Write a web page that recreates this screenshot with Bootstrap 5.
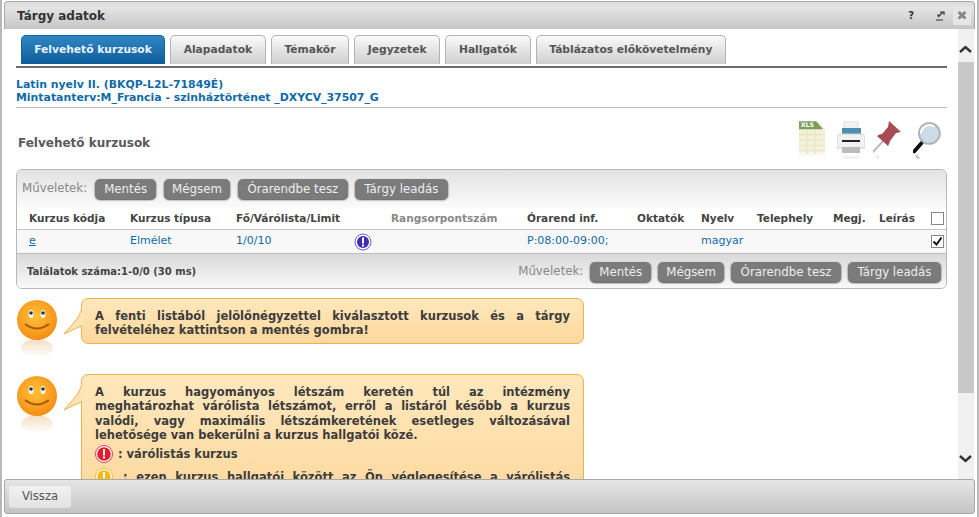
<!DOCTYPE html>
<html lang="hu"><head><meta charset="utf-8"><title>Tárgy adatok</title>
<link rel="stylesheet" href="https://cdn.jsdelivr.net/npm/bootstrap@5.3.0/dist/css/bootstrap.min.css">
<style>
html,body{height:517px;overflow:hidden;background:#fff}
body{font-family:"DejaVu Sans","Liberation Sans",sans-serif;font-size:10.5px;color:#444}
.win-outer{height:517px;border-left:2px solid #b8b8b8;border-right:2px solid #b8b8b8;padding:1px 2px 3px 2px;display:flex;flex-direction:column}
.win-title{height:28px;flex:none;background:linear-gradient(#dcdcdc,#e4e4e4 20%,#c6c6c6);border:1px solid #a8a8a8;border-bottom:0;border-radius:4px 4px 0 0;padding:0 3px 0 12px}
.win-title b{font-size:12px;color:#333}
.win-tool{font-size:10px;font-weight:700;color:#333;margin-right:13px}
.win-close{width:18px;height:18px;background:#e6e6e6;color:#888;font-size:13px;font-weight:700;line-height:18px;text-align:center}
.win-mid{flex:1 1 auto;min-height:0;overflow:hidden}
.win-main{width:954px;flex:none;padding:6px 0 0 12px}
.tabrow{height:33px;border-bottom:2px solid #6e6e6e;width:931px;gap:5px;padding-left:5px;align-items:flex-start}
.tab-i{height:29px;padding:0 12.7px;border:1px solid #b4b4b4;border-bottom:0;border-radius:5px 5px 0 0;background:linear-gradient(#fafafa,#cfcfcf);font-weight:700;color:#555;font-size:10.7px;line-height:27px}
.tab-a{background:linear-gradient(#2f86c4,#0e5c9a);color:#e8f2fa;border-color:#15639f;width:144px;padding:0;text-align:center}
.subj{width:931px;height:40px;border-bottom:1px solid #bdbdbd;padding-top:10px;color:#0f6ba8;font-weight:700;line-height:13px;font-size:10.9px}
.sect{width:931px;height:61px;padding:8px 5px 0 2px}
.sect-t{font-size:12px;font-weight:700;color:#5a5a5a}
.sect-ic{align-self:flex-start;padding-top:5px}
.ic-xls{margin-right:12px}.ic-prn{margin-right:8px}.ic-pin{margin-right:12px}
.grid-box{width:931px;height:120px;border:1px solid #b8b8b8;border-radius:6px;overflow:hidden;background:#fff}
.g-top{height:38px;background:linear-gradient(#e2e2e2,#fbfbfb);padding:0 5px;gap:7px}
.lbl{color:#888;font-size:11.8px}
.g-top .lbl{margin-right:1px}
.act{height:20px;padding:0 9.5px;background:#7b7b7b;border:0;border-radius:5px;color:#eee;font-size:11.8px;line-height:20px;box-shadow:0 1px 2px #444}
.act-me{padding:0 9px}
.act-ms{padding:0 8px}
.g-top .act-me,.g-top .act-ms{margin-right:1px}
.g-head,.g-row{display:grid;grid-template-columns:12px 101px 106px 118px 37px 136px 110px 64px 56px 76px 46px 52px 14px;align-items:center}
.g-head{height:22px;background:#fff;border-bottom:1px solid #c4c4c4;font-weight:700;color:#444;font-size:10.5px}
.g-row{height:24px;background:#f8f8f8;border-bottom:1px solid #bdbdbd;color:#0f6ba8;font-size:11px}
.g-row a{color:#0f6ba8}
.muted-h{color:#888}
.box-ck{width:13px;height:13px;border:1px solid #888;background:#fff;display:block}
.g-foot{height:35px;background:linear-gradient(#d9d9d9,#fafafa);padding:0 5px 0 10px}
.g-foot b{color:#444;font-size:10px}
.g-right{gap:7px}
.tip{width:568px;align-items:flex-start}
.tip-ic{width:65px;flex:none}
.bubble{position:relative;width:503px;background:linear-gradient(#ffe8bd,#fdd79b);border:1px solid #edb14f;border-radius:7px;padding:10px 13px 0 13px;color:#3c3c3c;font-weight:700;font-size:11.5px;line-height:14.3px;height:46px}
.bubble.tall{height:140px;padding-top:10px}
.ln{display:block;text-align:justify;text-align-last:justify}
.ln-e{display:block;text-align:left}
.spout{position:absolute;left:-19px;top:7px}
.t1{margin-top:9px}
.t2{margin-top:16px}
.ic-line{gap:5px;margin-top:2px;min-height:20px}
.ic-gap{gap:10px;margin-top:3px}
.scrl{width:16px;flex:none;background:#f0f0f0;position:relative}
.scrl-th{position:absolute;left:0;right:0;top:33px;height:331px;background:#c8c8c8}
.scrl-a{position:absolute;left:1px}
.scrl-up{top:16px}.scrl-dn{top:426px}
.win-foot{height:35px;flex:none;background:linear-gradient(#e6e6e6,#c4c4c4);border:1px solid #a8a8a8;border-radius:3px;padding-left:4px}
.back-btn{height:22px;width:62px;padding:0;border:0;border-radius:3px;background:linear-gradient(#f2f2f2,#e2e2e2);color:#555;font-size:11.6px}
</style></head><body>
<div class="win-outer">
<div class="win-title d-flex align-items-center justify-content-between">
 <b>Tárgy adatok</b>
 <div class="d-flex align-items-center gap-2"><span class="win-tool">?</span>
  <svg width="10" height="10" viewBox="0 0 10 10"><path d="M1 9h7M3 6l5-5M5 1h4v3M2 4h2" fill="none" stroke="#333" stroke-width="1.2"/></svg>
  <span class="win-close">✖</span></div>
</div>
<div class="win-mid d-flex">
 <div class="win-main">
  <div class="tabrow d-flex">
   <span class="tab-i tab-a">Felvehető kurzusok</span><span class="tab-i">Alapadatok</span><span class="tab-i">Témakör</span><span class="tab-i">Jegyzetek</span><span class="tab-i">Hallgatók</span><span class="tab-i">Táblázatos előkövetelmény</span>
  </div>
  <div class="subj">Latin nyelv II. (BKQP-L2L-71849É)<br>Mintatanterv:M_Francia - szinháztörténet _DXYCV_37507_G</div>
  <div class="sect d-flex justify-content-between align-items-center">
   <span class="sect-t">Felvehető kurzusok</span>
   <div class="sect-ic d-flex align-items-start">
    <svg class="ic-xls" width="26" height="38" viewBox="2 1 29 42"><defs><linearGradient id="fd" x1="0" y1="0" x2="0" y2="1"><stop offset="0" stop-color="#f3f1d8"/><stop offset=".75" stop-color="#f3f1d8"/><stop offset="1" stop-color="#fff"/></linearGradient></defs><path d="M2 1h21l8 9v32H2z" fill="url(#fd)"/><path d="M2 1h19l8 9H2z" fill="#7d9c5e"/><path d="M2 16h29M2 22h29M2 28h29M2 34h29M11 10v28M20 10v28" stroke="#e2e2c4"/><text x="4" y="8" font-size="7" font-weight="700" fill="#fff" font-family="DejaVu Sans">XLS</text></svg>
    <svg class="ic-prn" width="28" height="38" viewBox="4 1 28 38"><rect x="11" y="1" width="14" height="9" rx="1" fill="#f2f2f2" stroke="#ddd"/><rect x="9" y="8" width="19" height="8" fill="#4c8fb0"/><path d="M4 17q0-3 5-3h18q5 0 5 3v11H4z" fill="#f1f1f1" stroke="#d4d4d4"/><rect x="9" y="20" width="18" height="2" fill="#222"/><rect x="9" y="27" width="18" height="6" fill="#bbb"/><rect x="10" y="36" width="16" height="3" fill="#f2f2f2"/></svg>
    <svg class="ic-pin" width="28" height="38" viewBox="3 1 28 38"><path d="M3 32l11-12" stroke="#b9b9b9" stroke-width="2"/><path d="M19 1l12 11-5 1-6 8q-1 4-2 5L7 16q2-2 5-2l6-7z" fill="#a84a52"/><path d="M6 36l3 2" stroke="#e6e6e6" stroke-width="2"/></svg>
    <svg width="29" height="38" viewBox="2 1 30 40"><path d="M3 33l8-9" stroke="#111" stroke-width="4" stroke-linecap="round"/><circle cx="19" cy="14" r="11" fill="#c9dce8" stroke="#b3b3b3" stroke-width="2"/><path d="M10 14a9 9 0 0 1 14-7" fill="none" stroke="#fff" stroke-width="2"/><path d="M5 37l3 4" stroke="#ccc" stroke-width="3"/></svg>
   </div>
  </div>
  <div class="grid-box">
   <div class="g-top d-flex align-items-center"><span class="lbl">Műveletek:</span><button class="act act-me">Mentés</button><button class="act act-ms">Mégsem</button><button class="act">Órarendbe tesz</button><button class="act">Tárgy leadás</button></div>
   <div class="g-head"><span></span><span>Kurzus kódja</span><span>Kurzus típusa</span><span>Fő/Várólista/Limit</span><span></span><span class="muted-h">Rangsorpontszám</span><span>Órarend inf.</span><span>Oktatók</span><span>Nyelv</span><span>Telephely</span><span>Megj.</span><span>Leírás</span><span class="box-ck"></span></div>
   <div class="g-row"><span></span><span><a href="#">e</a></span><span>Elmélet</span><span>1/0/10</span><span class="d-flex"><svg width="18" height="18" viewBox="0 0 18 18"><circle cx="9" cy="9" r="8" fill="#fff" stroke="#6a5fc4"/><circle cx="9" cy="9" r="6" fill="#3c2fb4"/><rect x="8" y="4.5" width="2" height="6" fill="#fff"/><rect x="8" y="11.5" width="2" height="2" fill="#fff"/></svg></span><span></span><span>P:08:00-09:00;</span><span></span><span>magyar</span><span></span><span></span><span></span><span class="box-ck d-flex align-items-center justify-content-center"><svg width="11" height="11" viewBox="0 0 11 11"><path d="M1.5 5.5l3 3 5-7" fill="none" stroke="#111" stroke-width="2"/></svg></span></div>
   <div class="g-foot d-flex align-items-center justify-content-between"><b>Találatok száma:1-0/0 (30 ms)</b><div class="g-right d-flex align-items-center"><span class="lbl">Műveletek:</span><button class="act act-me">Mentés</button><button class="act act-ms">Mégsem</button><button class="act">Órarendbe tesz</button><button class="act">Tárgy leadás</button></div></div>
  </div>
  <div class="tip t1 d-flex"><div class="tip-ic"><svg width="44" height="60" viewBox="0 0 44 60"><defs><radialGradient id="f" cx=".45" cy=".4" r=".7"><stop offset="0" stop-color="#ffc23a"/><stop offset="1" stop-color="#f2860f"/></radialGradient><linearGradient id="r" x1="0" y1="0" x2="0" y2="1"><stop offset="0" stop-color="#f6dcc0"/><stop offset="1" stop-color="#fff"/></linearGradient></defs><ellipse cx="21" cy="50" rx="16" ry="9" fill="url(#r)"/><ellipse cx="21" cy="22" rx="20" ry="20" fill="url(#f)"/><ellipse cx="15" cy="16" rx="2.4" ry="4" fill="#fff"/><ellipse cx="27" cy="16" rx="2.4" ry="4" fill="#fff"/><circle cx="15" cy="15" r="1.8" fill="#234"/><circle cx="27" cy="15" r="1.8" fill="#234"/><path d="M9 26q12 9 24 0" fill="none" stroke="#a8580c" stroke-width="2"/></svg></div>
   <div class="bubble"><svg class="spout" width="20" height="30" viewBox="0 0 20 30"><path d="M20 1L14 13 1 28l19-9z" fill="#ffe3b3" stroke="#edb14f"/><path d="M20 0v22" stroke="#ffe5b8" stroke-width="2"/></svg><span class="ln">A fenti listából jelölőnégyzettel kiválasztott kurzusok és a tárgy</span><span class="ln-e">felvételéhez kattintson a mentés gombra!</span></div></div>
  <div class="tip t2 d-flex"><div class="tip-ic"><svg width="44" height="60" viewBox="0 0 44 60"><ellipse cx="21" cy="50" rx="16" ry="9" fill="url(#r)"/><ellipse cx="21" cy="22" rx="20" ry="20" fill="url(#f)"/><ellipse cx="15" cy="16" rx="2.4" ry="4" fill="#fff"/><ellipse cx="27" cy="16" rx="2.4" ry="4" fill="#fff"/><circle cx="15" cy="15" r="1.8" fill="#234"/><circle cx="27" cy="15" r="1.8" fill="#234"/><path d="M9 26q12 9 24 0" fill="none" stroke="#a8580c" stroke-width="2"/></svg></div>
   <div class="bubble tall"><svg class="spout" width="20" height="30" viewBox="0 0 20 30"><path d="M20 1L14 13 1 28l19-9z" fill="#ffe3b3" stroke="#edb14f"/><path d="M20 0v22" stroke="#ffe5b8" stroke-width="2"/></svg><span class="ln">A kurzus hagyományos létszám keretén túl az intézmény</span><span class="ln">meghatározhat várólista létszámot, erről a listáról később a kurzus</span><span class="ln">valódi, vagy maximális létszámkeretének esetleges változásával</span><span class="ln-e">lehetősége van bekerülni a kurzus hallgatói közé.</span>
    <div class="ic-line d-flex align-items-center"><svg width="18" height="18" viewBox="0 0 18 18"><circle cx="9" cy="9" r="8.5" fill="#fff" stroke="#e36"/><circle cx="9" cy="9" r="6.8" fill="#e0202c"/><rect x="8" y="4" width="2" height="6.5" fill="#fff"/><rect x="8" y="11.5" width="2" height="2" fill="#fff"/></svg><span>: várólistás kurzus</span></div>
    <div class="ic-line ic-gap d-flex align-items-center"><svg class="flex-shrink-0" width="18" height="18" viewBox="0 0 18 18"><circle cx="9" cy="9" r="8.5" fill="#fff" stroke="#eb3"/><circle cx="9" cy="9" r="6.8" fill="#f5b814"/><rect x="8" y="4" width="2" height="6.5" fill="#fff"/><rect x="8" y="11.5" width="2" height="2" fill="#fff"/></svg><span class="ln flex-grow-1">: ezen kurzus hallgatói között az Ön véglegesítése a várólistás</span></div>
   </div></div>
 </div>
 <div class="scrl">
  <svg class="scrl-a scrl-up" width="13" height="8" viewBox="0 0 13 8"><path d="M1 7l5.5-5 5.5 5" fill="none" stroke="#333" stroke-width="2.4"/></svg>
  <div class="scrl-th"></div>
  <svg class="scrl-a scrl-dn" width="13" height="8" viewBox="0 0 13 8"><path d="M1 1l5.5 5 5.5-5" fill="none" stroke="#333" stroke-width="2.4"/></svg>
 </div>
</div>
<div class="win-foot d-flex align-items-center"><button class="back-btn">Vissza</button></div>
</div>
<script src="https://cdn.jsdelivr.net/npm/bootstrap@5.3.0/dist/js/bootstrap.bundle.min.js"></script>
</body></html>
